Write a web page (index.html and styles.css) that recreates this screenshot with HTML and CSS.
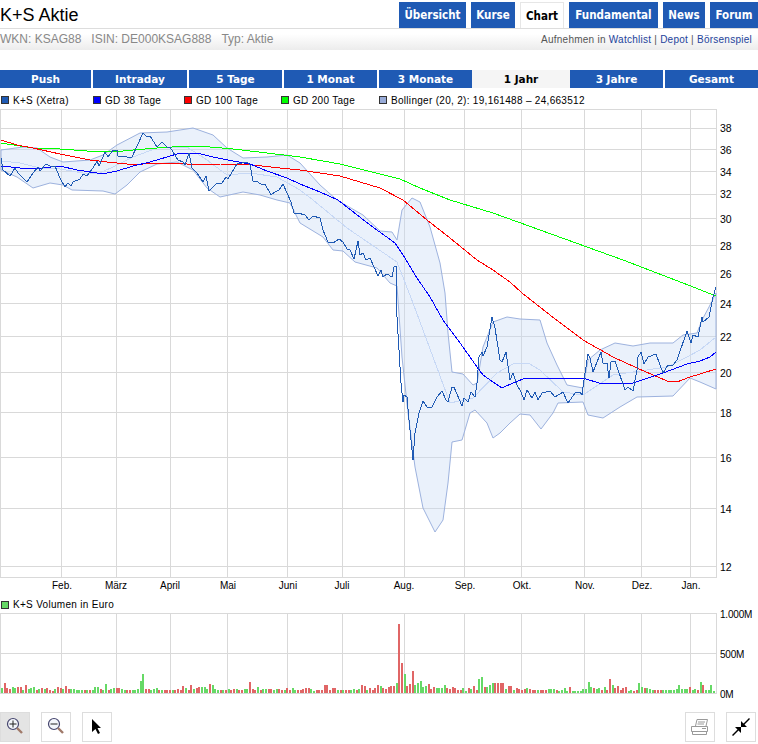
FILE: index.html
```html
<!DOCTYPE html>
<html lang="de">
<head>
    <meta charset="UTF-8">
    <title>K+S Aktie - Chart</title>
    <link rel="stylesheet" href="styles.css">
</head>
<body>
    <!-- Kopf mit Navigation -->
    <header class="head">
        <h1>K+S Aktie</h1>
        <nav class="main-nav">
            <a href="#" class="t-uebersicht">Übersicht</a>
            <a href="#" class="t-kurse">Kurse</a>
            <a href="#" class="active">Chart</a>
            <a href="#" class="t-fundamental">Fundamental</a>
            <a href="#" class="t-news">News</a>
            <a href="#" class="t-forum">Forum</a>
        </nav>
    </header>

    <div class="info">
        <div class="ids">
            <span>WKN: KSAG88</span>
            <span>ISIN: DE000KSAG888</span>
            <span>Typ: Aktie</span>
        </div>
        <div class="links">Aufnehmen in <a href="#">Watchlist</a> | <a href="#">Depot</a> | <a href="#">Börsenspiel</a></div>
    </div>

    <!-- Zeitraum -->
    <nav class="ranges">
        <a href="#">Push</a>
        <a href="#">Intraday</a>
        <a href="#">5 Tage</a>
        <a href="#">1 Monat</a>
        <a href="#">3 Monate</a>
        <a href="#" class="active">1 Jahr</a>
        <a href="#">3 Jahre</a>
        <a href="#">Gesamt</a>
    </nav>

    <ul class="legend">
        <li class="l-price"><i></i>K+S (Xetra)</li>
        <li class="l-gd38"><i></i>GD 38 Tage</li>
        <li class="l-gd100"><i></i>GD 100 Tage</li>
        <li class="l-gd200"><i></i>GD 200 Tage</li>
        <li class="l-boll"><i></i>Bollinger (20, 2): 19,161488 &#8211; 24,663512</li>
    </ul>

    <!-- Kurschart -->
    <svg class="chart" width="758" height="482" viewBox="0 109 758 482">
        <g class="grid">
            <path d="M0.5 109.5H716.5V577.5H0.5Z"/>
            <path d="M61.5 109V577M116.5 109V577M170.5 109V577M227.5 109V577M287.5 109V577M342.5 109V577M404.5 109V577M464.5 109V577M521.5 109V577M584.5 109V577M641.5 109V577M690.5 109V577"/>
            <path d="M0 128.5H716M0 149.5H716M0 171.5H716M0 194.5H716M0 218.5H716M0 245.5H716M0 273.5H716M0 303.5H716M0 336.5H716M0 372.5H716M0 412.5H716M0 457.5H716M0 508.5H716M0 566.5H716"/>
        </g>
        <path class="band" d="M1 150 23 147 37 148 50 157 63 162 90 160 103 155 117 145 140 133 167 132 193 128 213 135 227 148 243 158 267 157 287 155 300 163 320 185 337 200 363 215 380 231 392 232 397 240 402 210 412 198 420 202 430 227 440 263 445 293 448 333 452 372 463 374 473 385 477 383 483 347 493 322 507 317 520 319 540 320 547 343 557 365 567 385 583 388 588 360 600 350 615 343 633 346 650 343 673 343 683 335 697 333 702 320 709 307 716 293V389L700 382 690 378 673 396 637 397 620 407 603 418 588 415 583 402 558 403 553 413 541 429 530 415 520 414 510 423 500 433 493 438 487 423 475 410 470 413 462 440 452 442 448 483 443 520 435 532 423 508 415 467 408 413 402 357 397 286 390 283 377 268 355 262 343 251 333 250 323 237 300 223 290 203 277 200 260 195 243 192 220 197 207 188 193 170 177 162 157 164 140 172 127 185 115 194 103 191 72 190 63 185 50 183 33 188 17 177 1 170Z"/>
        <polyline class="boll-mid" points="1,161 20,163 40,168 60,169 83,173 100,173 117,165 133,157 157,148 187,147 207,160 227,175 250,173 277,177 300,190 313,200 347,228 397,262 413,303 433,357 450,403 473,398 497,373 513,364 528,363 540,370 563,392 583,395 613,375 633,372 667,367 687,357 700,350 716,337"/>
        <polyline class="gd200" points="1,143 33,148 60,149 87,151 113,152 133,150 157,148 187,146 210,147 233,149 267,153 300,157 340,164 400,179 420,188 450,200 493,213 540,230 623,260 683,283 716,296"/>
        <polyline class="gd100" points="1,140 17,145 33,148 60,154 90,160 107,162 127,164 143,164 167,163 187,164 220,164 253,165 280,168 300,170 340,176 380,188 403,200 427,220 450,238 477,260 493,270 510,282 522,293 550,315 583,340 613,357 637,368 667,381 677,382 690,377 700,374 716,369"/>
        <polyline class="gd38" points="1,166 20,168 43,168 60,166 77,170 97,173 107,173 117,171 133,166 150,162 167,157 180,153 197,153 213,157 233,161 250,164 267,171 287,178 300,184 320,192 338,200 370,225 395,243 405,258 415,275 430,297 443,320 458,340 477,367 483,375 493,382 502,388 513,383 523,379 537,378 583,378 602,384 633,383 663,373 687,364 700,361 710,357 716,352"/>
        <polyline class="price" points="1,158 3,170 10,176 15,168 18,173 27,182 33,173 38,167 40,171 46,164 50,166 55,166 60,178 65,187 68,183 71,186 73,182 80,179 83,174 87,176 93,168 97,161 99,166 105,152 108,157 113,150 117,150 118,156 127,157 132,157 143,133 147,137 150,136 157,147 162,142 167,147 170,147 178,160 183,162 185,165 189,153 192,168 197,173 203,182 206,176 209,191 217,183 222,183 226,177 228,179 237,164 247,162 250,165 253,181 258,182 262,185 265,184 271,195 275,192 279,190 283,184 291,202 294,213 298,213 305,215 309,220 313,216 320,218 323,230 328,242 333,243 339,239 343,242 347,249 350,250 354,259 358,241 360,255 363,253 366,260 370,258 378,276 381,270 383,277 387,274 392,277 394,267 396,266 397,317 399,350 401,383 403,402 404,395 407,397 409,420 413,460 415,433 419,413 423,401 427,407 432,407 437,397 442,391 446,400 448,402 452,387 454,387 462,406 464,398 468,402 471,392 475,397 477,383 479,357 482,352 483,356 487,347 492,317 495,328 500,360 502,362 506,352 510,380 513,373 517,385 521,392 524,400 527,390 532,398 535,392 538,400 542,393 550,391 555,397 563,392 568,403 575,393 580,392 582,395 584,380 588,354 590,358 593,372 601,352 603,363 607,363 609,378 611,362 615,361 625,390 628,387 633,391 637,370 638,357 641,352 644,364 648,357 656,354 663,373 668,365 673,365 677,360 687,331 691,343 693,335 698,337 702,317 703,322 709,317 713,297 716,287"/>
        <g class="y-axis">
            <text x="720" y="132">38</text>
            <text x="720" y="154">36</text>
            <text x="720" y="176">34</text>
            <text x="720" y="198">32</text>
            <text x="720" y="223">30</text>
            <text x="720" y="250">28</text>
            <text x="720" y="278">26</text>
            <text x="720" y="308">24</text>
            <text x="720" y="341">22</text>
            <text x="720" y="377">20</text>
            <text x="720" y="417">18</text>
            <text x="720" y="462">16</text>
            <text x="720" y="513">14</text>
            <text x="720" y="571">12</text>
        </g>
        <g class="x-axis">
            <text x="62" y="589">Feb.</text>
            <text x="116" y="589">März</text>
            <text x="170" y="589">April</text>
            <text x="228" y="589">Mai</text>
            <text x="288" y="589">Juni</text>
            <text x="342" y="589">Juli</text>
            <text x="404" y="589">Aug.</text>
            <text x="465" y="589">Sep.</text>
            <text x="522" y="589">Okt.</text>
            <text x="585" y="589">Nov.</text>
            <text x="642" y="589">Dez.</text>
            <text x="691" y="589">Jan.</text>
        </g>
    </svg>

    <ul class="legend legend-vol">
        <li class="l-vol"><i></i>K+S Volumen in Euro</li>
    </ul>

    <!-- Volumen -->
    <svg class="chart chart-vol" width="758" height="88" viewBox="0 612 758 88">
        <g class="grid">
            <path d="M0.5 613.5H716.5V693.5H0.5Z"/>
            <path d="M61.5 613V693M116.5 613V693M170.5 613V693M227.5 613V693M287.5 613V693M342.5 613V693M404.5 613V693M464.5 613V693M521.5 613V693M584.5 613V693M641.5 613V693M690.5 613V693"/>
            <path d="M0 653.5H716"/>
        </g>
        <g id="volume"></g>
        <g class="y-axis vol-axis">
            <text x="720" y="618">1.000M</text>
            <text x="720" y="658">500M</text>
            <text x="720" y="698">0M</text>
        </g>
    </svg>

    <!-- Werkzeuge -->
    <div class="tools">
        <div class="tool-group">
            <button class="tool on" title="Vergrößern">
                <svg width="18" height="20" viewBox="0 0 18 20">
                    <circle cx="7" cy="7" r="5.5" class="lens"/>
                    <path d="M7 3.500V10.500M3.500 7H10.500" class="mark"/>
                    <path d="M11 11 16 16" class="handle"/>
                </svg>
            </button>
            <button class="tool" title="Verkleinern">
                <svg width="18" height="20" viewBox="0 0 18 20">
                    <circle cx="7" cy="7" r="5.5" class="lens"/>
                    <path d="M3.500 7H10.500" class="mark"/>
                    <path d="M11 11 16 16" class="handle"/>
                </svg>
            </button>
            <button class="tool" title="Auswahl">
                <svg width="10" height="16" viewBox="0 0 10 16">
                    <path d="M0 0 9 9H5.500L8 14 6 15 3.500 10 0 13Z"/>
                </svg>
            </button>
        </div>
        <div class="tool-group">
            <button class="tool" title="Drucken">
                <svg width="18" height="16" viewBox="0 0 18 16">
                    <path d="M4.500 7 6 .5H16.500L15 7" class="printer"/>
                    <path d="M7 3H14M6.500 5H13" class="printer"/>
                    <path d="M.5 7.500H16.500V12.500H.5ZM1.500 12.500V15.500H15.500V12.500M11 9.500H15" class="printer"/>
                </svg>
            </button>
            <button class="tool" title="Verkleinern">
                <svg width="18" height="18" viewBox="0 0 18 18">
                    <path d="M17 0 18 1 12.500 6.500 15 9H9V3L11.500 5.500ZM1 18 0 17 5.500 11.500 3 9H9V15L6.500 12.500Z"/>
                </svg>
            </button>
        </div>
    </div>

    <script src="script.js"></script>
</body>
</html>
```

FILE: styles.css
```css
/* Grundlayout */
html, body {
    margin: 0;
    padding: 0;
}

body {
    width: 758px;
    height: 744px;
    overflow: hidden;
    background: #fff;
    font-family: "Liberation Sans", Arial, sans-serif;
    color: #000;
}

a {
    text-decoration: none;
}

/* Kopf */
.head {
    display: flex;
    justify-content: space-between;
    align-items: flex-end;
    height: 28px;
    border-bottom: 1px solid #ddd;
}

h1 {
    margin: 0 0 2px;
    font-size: 18px;
    font-weight: normal;
    line-height: 22px;
}

.main-nav {
    display: flex;
    gap: 5px;
}

.main-nav a {
    display: block;
    box-sizing: border-box;
    height: 26px;
    background: #1f5ab4;
    color: #fff;
    text-align: center;
    font: bold 11.5px/26px "DejaVu Sans Condensed", "DejaVu Sans", Tahoma, sans-serif;
    font-stretch: condensed;
}

.t-uebersicht { width: 67px; }
.t-kurse { width: 44px; }
.t-fundamental { width: 89px; }
.t-news { width: 42px; }
.t-forum { width: 48px; }

.main-nav a.active {
    width: 44px;
    border: 1px solid #e6e6e6;
    border-bottom: 0;
    background: #fff;
    color: #000;
    line-height: 27px;
}

/* Infozeile */
.info {
    display: flex;
    justify-content: space-between;
    height: 16px;
    margin-top: 5px;
    background: linear-gradient(#fff, #ececec);
    font-size: 12px;
    line-height: 10px;
    color: #888;
}

.ids {
    display: flex;
    gap: 10px;
}

.links {
    padding-right: 6px;
    font-size: 10px;
    letter-spacing: .25px;
    line-height: 12px;
    color: #555;
}

.links a {
    color: #23439b;
}

/* Zeitraum */
.ranges {
    display: grid;
    grid-template-columns: 91px 94px 93px 93px 93px 94px 93px 93px;
    column-gap: 2px;
    margin-top: 20px;
    width: 758px;
}

.ranges a {
    height: 18px;
    background: #1f5ab4;
    color: #fff;
    text-align: center;
    font: bold 10.500px/18px "DejaVu Sans", Verdana, sans-serif;
}

.ranges a.active {
    margin: 0 -2px;
    background: #f5f5f5;
    color: #000;
}

/* Legende */
.legend {
    display: grid;
    grid-template-columns: 92px 91px 97px 98px auto;
    box-sizing: border-box;
    height: 21px;
    margin: 0;
    padding: 3px 0 0 1px;
    list-style: none;
    font-size: 10px;
    letter-spacing: .3px;
}

.legend li {
    display: flex;
    align-items: center;
}

.legend i {
    display: block;
    width: 6px;
    height: 6px;
    margin-right: 4px;
    border: 1px solid #333;
}

.l-price i { background: #1f5ab4; }
.l-gd38 i { background: #0000ff; }
.l-gd100 i { background: #ff0000; }
.l-gd200 i { background: #00ff00; }
.l-boll i { background: #98abd8; }
.l-vol i { background: #66d966; }

.legend-vol {
    display: flex;
    height: 15px;
    margin-top: 6px;
    padding-top: 0;
}

/* Charts */
.chart {
    display: block;
}

/* die Achsenbeschriftung steht oben etwas ueber */
.chart-vol {
    overflow: visible;
}

.grid path {
    fill: none;
    stroke: #d9d9d9;
    stroke-width: 1;
    shape-rendering: crispEdges;
}

.band {
    fill: #c8daf5;
    fill-opacity: .38;
    stroke: #9db2de;
    stroke-width: 1;
}

polyline {
    fill: none;
    stroke-width: 1;
    shape-rendering: crispEdges;
}

.boll-mid { stroke: #c7d8f5; }
.gd200 { stroke: #00ff00; }
.gd100 { stroke: #ff0000; }
.gd38 { stroke: #0000ff; }
.price { stroke: #1f5ab4; }

.y-axis text {
    font-size: 10.500px;
    fill: #000;
}

.vol-axis text {
    font-size: 10px;
    letter-spacing: -.2px;
}

.x-axis text {
    font-size: 10px;
    text-anchor: middle;
    fill: #000;
}

.vol-up { fill: #66d966; }
.vol-down { fill: #e06666; }

/* Werkzeuge */
.tools {
    display: flex;
    justify-content: space-between;
    margin-top: 12px;
    padding-right: 2px;
}

.tool-group {
    display: flex;
    gap: 11px;
}

.tool {
    display: flex;
    align-items: center;
    justify-content: center;
    box-sizing: border-box;
    width: 30px;
    height: 30px;
    padding: 0;
    border: 1px solid #ddd;
    background: #fff;
}

.tool.on {
    background: #e4e4e4;
}

.lens {
    fill: #f4f6fb;
    stroke: #45456e;
    stroke-width: 1.2;
}

.mark {
    fill: none;
    stroke: #222;
    stroke-width: 1;
}

.handle {
    fill: none;
    stroke: #a07a6a;
    stroke-width: 2.4;
}

.printer {
    fill: none;
    stroke: #999;
    stroke-width: 1;
}
```

FILE: script.js
```js
// Volumen in Pixeln: positiv = Kursverlust (rot), negativ = Kursgewinn (gruen)
var volumes = [
    -5, 10, 5, 4, -6, -5, 6, 6, -3, 8, -4, -5, -6, 3, -4, 5, -4, 5, 3, 2,
    -4, 6, 5, -4, 7, 4, -4, -4, -3, -3, -3, 3, -3, 3, -3, -6, -6, 4, -3, -9,
    3, -4, -5, 5, 5, -4, -3, 3, 3, -3, -3, -4, -12, -19, 4, 4, -3, -4, -5, 3,
    -3, 3, 3, 3, -3, 3, 4, 3, 7, -5, 3, 8, -4, 5, 6, -6, -6, -4, 9, -8,
    -4, -3, 3, -3, 3, -4, 3, 4, -4, 3, 3, -4, -4, 11, 4, 3, -6, 3, -4, -4,
    4, 4, -3, -4, 4, 3, -3, 5, 3, -5, -3, 3, 3, 4, 5, 5, -4, -2, 3, 3,
    3, 8, 8, 3, 5, 5, -3, 3, -3, 3, 3, -3, -4, 3, -4, 8, 7, -3, 5, 3,
    5, 8, -7, 5, 4, 6, 7, 7, -10, 69, 30, -19, 7, 9, 22, -8, -10, -12, -6, -7,
    9, 4, 6, -5, -5, -5, -8, 5, 4, 6, 5, 3, 3, -5, -2, 5, -4, 7, 3, -14,
    -16, 6, -6, -8, -10, 10, 10, 10, 10, -4, 7, 7, -3, 5, 4, 3, 4, -5, 4, 3,
    3, -3, 3, 3, 3, -4, -4, -4, 3, -2, -3, -5, -2, 6, -2, -2, -2, -2, -4, -4,
    -11, -6, 5, -4, -5, 3, -6, 3, 14, -8, 5, 7, 3, 5, 6, -2, -3, 2, 3, -10,
    -6, 5, -5, -4, -3, 3, 3, 3, -3, -3, -3, -3, -3, -4, -8, -4, -4, -4, 6, -3,
    -4, 3, -11, 8, -3, -3, -8, -2
];

var group = document.getElementById('volume');
var baseline = 693;

for (var i = 0; i < volumes.length; i++) {
    var value = volumes[i];
    var height = Math.abs(value);
    var bar = document.createElementNS('http://www.w3.org/2000/svg', 'rect');
    bar.setAttribute('x', Math.round(1 + i * 2.667));
    bar.setAttribute('y', baseline - height);
    bar.setAttribute('width', 2);
    bar.setAttribute('height', height);
    bar.setAttribute('class', value > 0 ? 'vol-down' : 'vol-up');
    group.appendChild(bar);
}
```
